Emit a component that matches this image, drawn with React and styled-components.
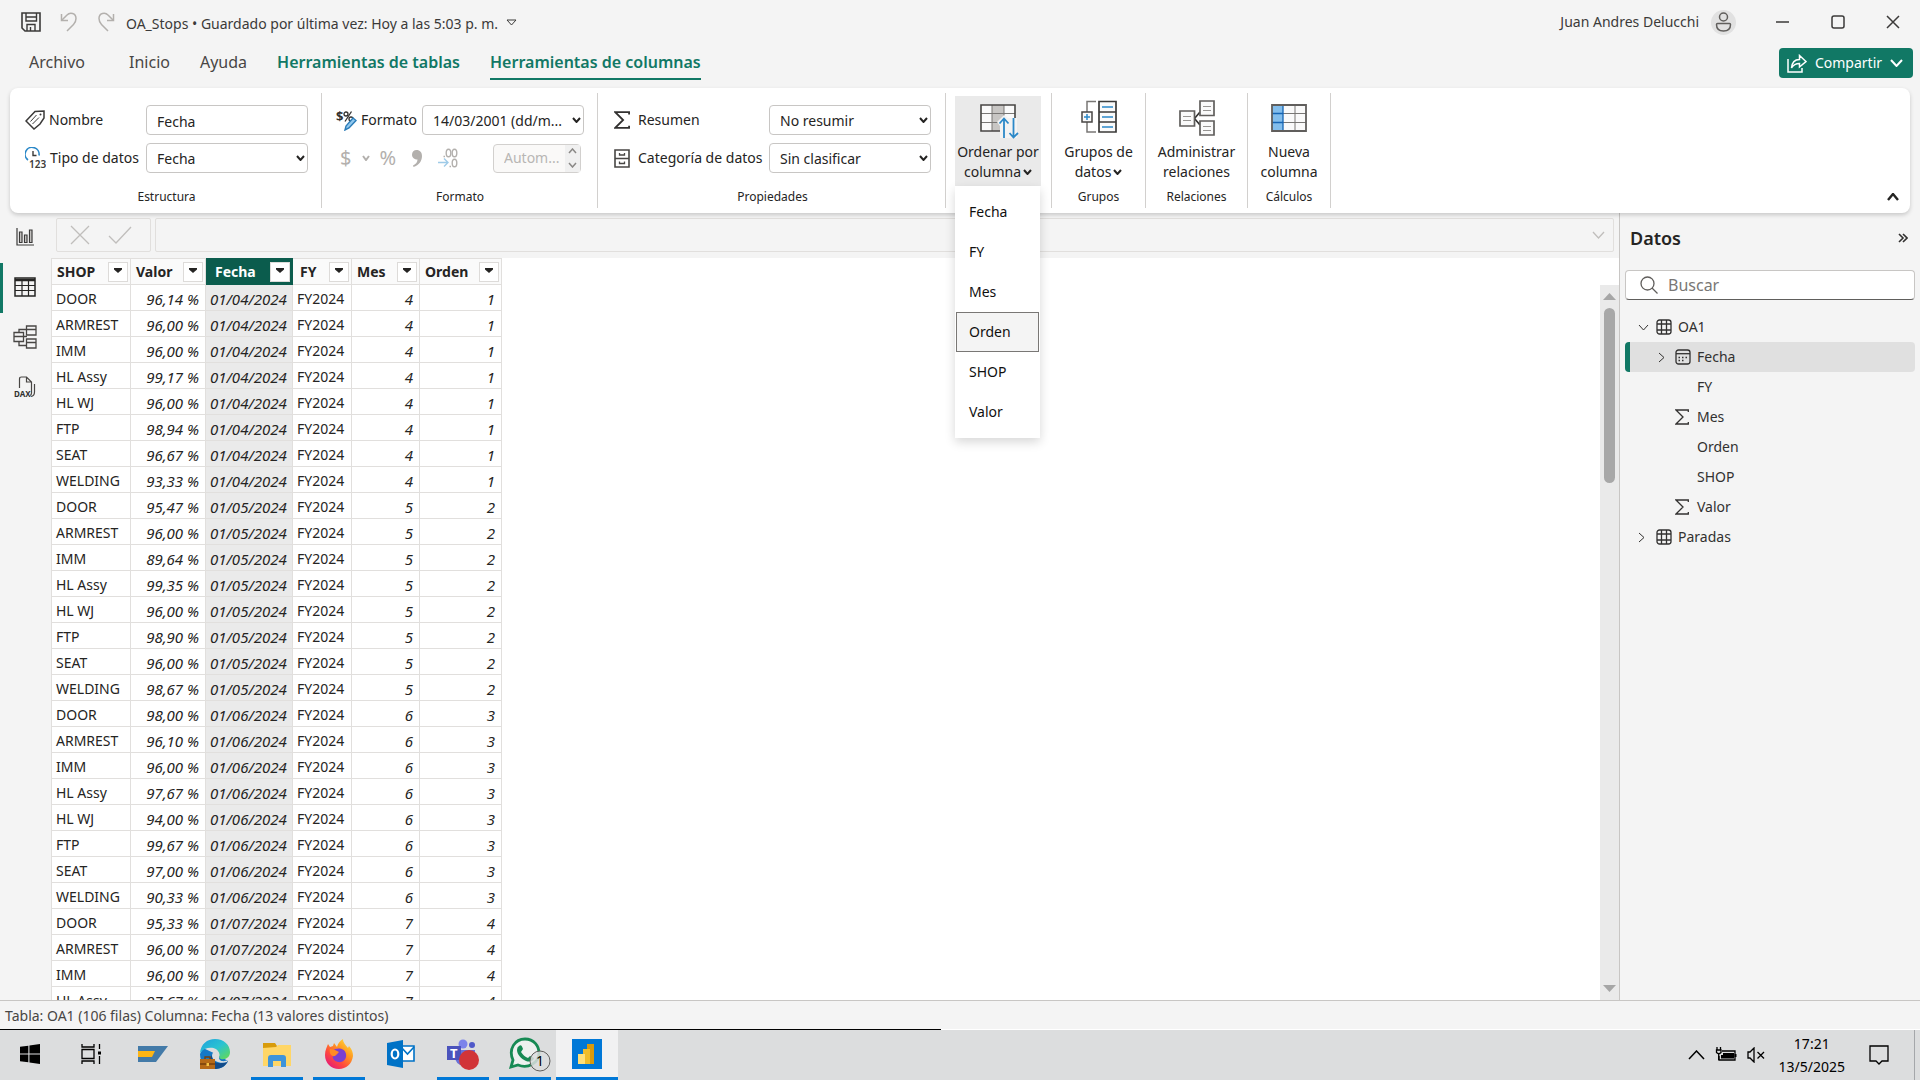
import React from 'react';
import styled, { createGlobalStyle } from 'styled-components';

const GlobalStyle = createGlobalStyle`
  * {
    box-sizing: border-box;
  }

  body {
    margin: 0;
    background: #f4f4f4;
    color: #252423;
    font-family: 'Noto Sans', 'Open Sans', sans-serif;
    font-size: 14px;
    line-height: 20px;
  }

  button,
  input,
  select {
    margin: 0;
    padding: 0;
    border: 0;
    background: none;
    color: inherit;
    font: inherit;
  }

  svg {
    display: block;
    flex: none;
  }
`;

const Window = styled.div`
  display: flex;
  flex-direction: column;
  height: 100vh;
  overflow: hidden;
`;

const TitleBar = styled.header`
  display: flex;
  align-items: center;
  height: 44px;
  padding: 0 20px 0 21px;
  color: #3b3a39;
`;

const QuickActions = styled.div`
  display: flex;
  gap: 19px;
  margin-right: 11px;
`;

const IconButton = styled.button`
  display: flex;
  align-items: center;
  justify-content: center;
`;

const DocumentTitle = styled.span`
  margin-right: 8px;
  padding-top: 4px;
  white-space: nowrap;
`;

const Account = styled.div`
  display: flex;
  align-items: center;
  gap: 12px;
  margin-left: auto;
  margin-right: 40px;
`;

const WindowControls = styled.div`
  display: flex;
  gap: 41px;
`;

const TabBar = styled.nav`
  display: flex;
  align-items: flex-start;
  height: 44px;
  padding: 4px 7px 0 29px;
`;

const Tab = styled.a`
  height: 30px;
  margin-top: 2px;
  margin-right: ${(props) => props.$gap || 30}px;
  border-bottom: 2px solid ${(props) => (props.$active ? '#117865' : 'transparent')};
  color: ${(props) => (props.$contextual ? '#117865' : '#484644')};
  font-size: 16px;
  font-weight: ${(props) => (props.$contextual ? 600 : 400)};
  line-height: 24px;
  text-decoration: none;
  white-space: nowrap;
`;

const ShareButton = styled.button`
  display: flex;
  align-items: center;
  justify-content: space-between;
  width: 134px;
  height: 30px;
  margin-left: auto;
  padding: 0 10px 0 8px;
  border-radius: 4px;
  background: #117865;
  color: #fff;
`;

const Ribbon = styled.section`
  position: relative;
  z-index: 2;
  display: flex;
  height: 125px;
  margin: 0 10px;
  padding: 5px 0;
  border-radius: 8px;
  background: #fff;
  box-shadow: 0 2px 4px rgba(0, 0, 0, 0.18);
`;

const RibbonGroup = styled.div`
  display: flex;
  flex-direction: column;
  padding: ${(props) => props.$pad};
  border-right: 1px solid #d2d0ce;
`;

const FieldGrid = styled.div`
  display: grid;
  grid-template-columns: ${(props) => props.$label}px 162px;
  row-gap: 8px;
  padding-top: 12px;
`;

const FieldLabel = styled.label`
  display: flex;
  align-items: center;
  gap: ${(props) => props.$gap || 4}px;
  height: 30px;
  white-space: nowrap;
`;

const Caption = styled.div`
  margin-top: auto;
  padding-bottom: 1px;
  font-size: 12px;
  text-align: center;
`;

const TextInput = styled.input`
  width: 100%;
  height: 30px;
  padding: 2px 10px 0;
  border: 1px solid #c8c6c4;
  border-radius: 4px;
  background: #fff;
`;

const SelectWrap = styled.div`
  position: relative;
  height: 30px;
`;

const SelectBox = styled.select`
  width: 100%;
  height: 30px;
  padding: 2px 10px 0;
  border: 1px solid #c8c6c4;
  border-radius: 4px;
  background: #fff;
  appearance: none;
`;

const SelectArrow = styled.span`
  position: absolute;
  top: 12px;
  right: 3px;
  pointer-events: none;
`;

const FormatRow = styled.div`
  grid-column: 1 / -1;
  display: flex;
  align-items: center;
  height: 30px;
  padding: 0 3px 0 4px;
  color: #b3b0ad;
`;

const FormatButton = styled.button`
  display: flex;
  align-items: center;
  margin-right: ${(props) => props.$gap}px;
  font-size: 20px;
  line-height: 30px;
`;

const Spinner = styled.div`
  display: flex;
  width: 88px;
  height: 29px;
  margin-left: auto;
  border: 1px solid #d2d0ce;
  border-radius: 4px;
  background: #faf9f8;
`;

const SpinnerInput = styled.input`
  width: 71px;
  padding-left: 10px;

  &:disabled {
    color: #b8b6b4;
  }
`;

const SpinnerButtons = styled.div`
  display: flex;
  flex-direction: column;
  justify-content: space-around;
  align-items: center;
  width: 15px;
  background: #f0f0f0;
  color: #8a8886;
`;

const MenuAnchor = styled.div`
  position: relative;
`;

const LargeButton = styled.button`
  display: flex;
  flex-direction: column;
  align-items: center;
  gap: 6px;
  width: ${(props) => props.$width}px;
  height: 90px;
  margin-top: 3px;
  padding-top: 4px;
  background: ${(props) => (props.$open ? '#eaeaea' : 'transparent')};
  white-space: nowrap;

  > svg {
    overflow: visible;
  }
`;

const TwoLines = styled.span`
  display: flex;
  flex-direction: column;
  align-items: center;
`;

const LastLine = styled.span`
  display: flex;
  align-items: center;
  gap: 2px;
`;

const DropMenu = styled.ul`
  position: absolute;
  top: 100%;
  left: 0;
  width: 85px;
  margin: 0;
  padding: 6px 1px;
  background: #fff;
  box-shadow: 0 4px 10px rgba(0, 0, 0, 0.16);
  list-style: none;
`;

const MenuItem = styled.button`
  display: block;
  width: 100%;
  height: 40px;
  padding: 0 12px;
  border: 1px solid ${(props) => (props.$hovered ? '#797775' : 'transparent')};
  background: ${(props) => (props.$hovered ? '#f4f4f4' : 'transparent')};
  color: #11100f;
  text-align: left;
`;

const CollapseButton = styled(IconButton)`
  align-self: flex-end;
  height: 22px;
  margin-left: auto;
  padding: 0 11px;
`;

const Workspace = styled.div`
  display: flex;
  flex: 1;
  min-height: 0;
`;

const ViewRail = styled.nav`
  display: flex;
  flex-direction: column;
  width: 51px;
`;

const RailButton = styled.button`
  display: flex;
  align-items: center;
  justify-content: center;
  height: 50px;
  padding: 0 4px 3px 0;
  border-left: 3px solid ${(props) => (props.$active ? '#117865' : 'transparent')};
  color: #3b3a39;
`;

const Center = styled.main`
  display: flex;
  flex: 1;
  flex-direction: column;
  min-width: 0;
`;

const FormulaBar = styled.div`
  display: flex;
  gap: 4px;
  height: 45px;
  padding: 5px 5px 6px;
`;

const FormulaActions = styled.div`
  display: flex;
  align-items: center;
  gap: 18px;
  width: 95px;
  padding-left: 13px;
  border: 1px solid #e1dfdd;
  border-radius: 2px;
  color: #c0bebc;
`;

const FormulaField = styled.div`
  display: flex;
  flex: 1;
  align-items: center;
  padding-right: 8px;
  border: 1px solid #e1dfdd;
  border-radius: 2px;
  color: #c0bebc;
`;

const FormulaInput = styled.input`
  flex: 1;
  height: 100%;
`;

const GridArea = styled.div`
  display: flex;
  flex: 1;
  justify-content: space-between;
  min-height: 0;
  overflow: hidden;
  background: #fff;
`;

const DataTable = styled.table`
  border-collapse: collapse;
  table-layout: fixed;
  width: 450px;
`;

const HeadCell = styled.th`
  width: ${(props) => props.$width}px;
  height: 26px;
  padding: 0 2px 0 5px;
  border: 1px solid ${(props) => (props.$selected ? '#0b5c4d' : '#e1dfdd')};
  background: ${(props) => (props.$selected ? '#0b5c4d' : '#fafafa')};
  color: ${(props) => (props.$selected ? '#fff' : '#252423')};
  font-size: 14px;
  font-weight: 700;
`;

const HeadContent = styled.div`
  display: flex;
  align-items: center;
  justify-content: space-between;
  padding-left: ${(props) => props.$indent || 0}px;
`;

const FilterButton = styled.button`
  display: flex;
  align-items: center;
  justify-content: center;
  width: 20px;
  height: 20px;
  padding-bottom: 2px;
  border: 1px solid #dddbd9;
  background: #fff;
  color: #252423;
`;

const Cell = styled.td`
  height: 26px;
  padding: 2px 6px 0 4px;
  border: 1px solid #e1dfdd;
  background: ${(props) => (props.$selected ? '#eaeaea' : '#fff')};
  font-size: ${(props) => (props.$numeric ? 15 : 14)}px;
  font-style: ${(props) => (props.$numeric ? 'italic' : 'normal')};
  text-align: ${(props) => (props.$numeric ? 'right' : 'left')};
  white-space: nowrap;
`;

const ScrollTrack = styled.div`
  display: flex;
  flex-direction: column;
  align-items: center;
  width: 19px;
  margin-top: 27px;
  padding: 8px 0;
  background: #eaeaea;
  color: #a6a6a6;
`;

const ScrollThumb = styled.div`
  width: 11px;
  height: 25%;
  margin: 8px 0 auto;
  border-radius: 6px;
  background: #a8a8a8;
`;

const DataPane = styled.aside`
  width: 301px;
  padding: 0 5px;
  border-left: 1px solid #c8c6c4;
`;

const PaneHeader = styled.div`
  display: flex;
  align-items: center;
  justify-content: space-between;
  height: 57px;
  padding: 0 7px 7px 5px;
`;

const PaneTitle = styled.h2`
  margin: 0;
  font-size: 18px;
  font-weight: 600;
`;

const SearchBox = styled.label`
  display: flex;
  align-items: center;
  gap: 10px;
  height: 30px;
  margin-bottom: 12px;
  padding: 0 14px;
  border: 1px solid #c8c6c4;
  border-bottom-color: #605e5c;
  border-radius: 4px;
  background: #fff;
  color: #605e5c;
`;

const SearchInput = styled.input`
  flex: 1;
  min-width: 0;
  font-size: 16px;

  &::placeholder {
    color: #797775;
    opacity: 1;
  }
`;

const FieldList = styled.ul`
  margin: 0;
  padding: 0;
  list-style: none;
`;

const FieldButton = styled.button`
  display: flex;
  align-items: center;
  width: 100%;
  height: 30px;
  padding-left: ${(props) => (props.$nested ? 28 : 8)}px;
  border-left: 5px solid ${(props) => (props.$selected ? '#117865' : 'transparent')};
  border-radius: 4px;
  background: ${(props) => (props.$selected ? '#e0e0e0' : 'transparent')};
  color: #323130;
`;

const Slot = styled.span`
  display: flex;
  width: ${(props) => props.$width}px;
`;

const StatusBar = styled.footer`
  height: 29px;
  padding: 5px 5px 0;
  border-top: 1px solid #c8c6c4;
  color: #484644;
`;

const Taskbar = styled.footer`
  display: flex;
  height: 51px;
  border-top: 1px solid;
  border-image: linear-gradient(to right, #000 49%, #fff 49%) 1;
  background: #dcddde;
  color: #000;
`;

const TaskButton = styled.button`
  display: flex;
  flex-direction: column;
  align-items: center;
  justify-content: center;
  width: 62px;
  height: 50px;
  padding: ${(props) => (props.$active ? 0 : '0 5px')};
  background: ${(props) => (props.$active ? '#f1f1f2' : 'transparent')};

  &:first-child {
    width: 60px;
  }

  &::after {
    content: '';
    width: 100%;
    height: 3px;
    margin-top: auto;
    background: ${(props) => (props.$running ? '#0078d7' : 'transparent')};
  }

  svg {
    margin-top: auto;
  }
`;

const Tray = styled.div`
  display: flex;
  align-items: center;
  margin-left: auto;
  padding-right: 5px;
`;

const Clock = styled.div`
  margin: 0 24px 0 14px;
  line-height: 23px;
  text-align: center;
`;

const ShowDesktop = styled.div`
  align-self: stretch;
  width: 1px;
  margin-left: 25px;
  background: #a5a7aa;
`;

const Chevron = ({ w = 10, h = 6, sw = 1, dir = 'down' }) => {
  const paths = {
    down: `M1 1L${w / 2} ${h - 1}L${w - 1} 1`,
    up: `M1 ${h - 1}L${w / 2} 1L${w - 1} ${h - 1}`,
    right: `M1 1L${w - 1} ${h / 2}L1 ${h - 1}`,
  };
  return (
    <svg width={w} height={h} fill="none" stroke="currentColor" strokeWidth={sw}>
      <path d={paths[dir]} />
    </svg>
  );
};

const Triangle = ({ up }) => (
  <svg width="13" height="7" fill="currentColor">
    <path d={up ? 'M0 7L6.5 0L13 7z' : 'M0 0H13L6.5 7z'} />
  </svg>
);

const SaveIcon = () => (
  <svg width="20" height="20" viewBox="0 0 20 20" fill="none" stroke="#3b3a39" strokeWidth="1.6">
    <path d="M1 1H19V19H4L1 16z" />
    <path d="M5 1V9H15.500V1M5.500 5H15M6 19V12.500H14V19M9.500 15V19" strokeWidth="1.4" />
  </svg>
);

const UndoIcon = ({ redo }) => (
  <svg width="18" height="20" viewBox="0 0 18 20" fill="none" stroke="#b3b0ad" strokeWidth="1.5">
    <g transform={redo ? 'translate(18 0) scale(-1 1)' : undefined}>
      <path d="M1.500 2V8.500H8" />
      <path d="M1.500 8.500L7 3C10-.300 16 1 16 6.500C16 9 15 11 13.500 12.500L7 19" />
    </g>
  </svg>
);

const TagIcon = () => (
  <svg width="20" height="20" viewBox="0 0 20 20" fill="none" stroke="#3b3a39" strokeWidth="1.5">
    <path d="M1 11L10 1.500L19 1V8L15 14L9 19z" />
    <path d="M5.500 11.500L11.500 5M7.500 14L14 7.500" strokeWidth="1" />
    <circle cx="15.500" cy="4.500" r="1" fill="#3b3a39" stroke="none" />
  </svg>
);

const DataTypeIcon = () => (
  <svg width="21" height="22" viewBox="0 0 21 22" fill="none">
    <path d="M3 13A7 7 0 1 1 14 8.500" stroke="#2b88c8" strokeWidth="1.6" />
    <path d="M8 4V8.500H11.500" stroke="#3b3a39" strokeWidth="1.4" />
    <text x="4" y="20.500" fill="#3b3a39" fontSize="10" fontWeight="600">123</text>
  </svg>
);

const FormatIcon = () => (
  <svg width="21" height="21" viewBox="0 0 21 21">
    <text x="0" y="11" fill="#323130" fontSize="13" fontWeight="700">$</text>
    <circle cx="10" cy="4" r="2" fill="none" stroke="#323130" strokeWidth="1.3" />
    <circle cx="15" cy="9" r="2" fill="none" stroke="#323130" strokeWidth="1.3" />
    <path d="M15.500 1.500L9 11.500" stroke="#323130" strokeWidth="1.3" />
    <path d="M9 20L10 16L17 8L20 10.500L13 18z" fill="#8fc7ee" stroke="#2b7cb8" strokeWidth="1.4" />
  </svg>
);

const DecimalsIcon = () => (
  <svg width="20" height="20" viewBox="0 0 20 20" fill="none" stroke="#b3b0ad" strokeWidth="1.4">
    <ellipse cx="10.500" cy="5" rx="2.300" ry="3.800" />
    <ellipse cx="16.500" cy="5" rx="2.300" ry="3.800" />
    <ellipse cx="16.500" cy="15" rx="2.300" ry="3.800" />
    <path d="M5.500 8.500H7M11.500 18.500H13" />
    <path d="M0 14.500H10M6 10.500L10 14.500L6 18.500" stroke="#9fcbe8" />
  </svg>
);

const CommaIcon = () => (
  <svg width="10" height="17" viewBox="0 0 10 17" fill="currentColor">
    <path d="M4.500 0C8 0 10 2.500 10 6C10 11 7 15 1.500 17L1 15.500C4 14 5.500 12 5.500 9.500C2.500 9.500 0 7.500 0 4.700C0 2 2 0 4.500 0z" />
  </svg>
);

const SigmaIcon = ({ w = 14, h = 16, sw = 1.3 }) => (
  <svg width={w} height={h} viewBox="0 0 14 16" fill="none" stroke="#323130" strokeWidth={sw}>
    <path d="M13.300 3V1H1L8 8L1 15H13.300V13" />
  </svg>
);

const CabinetIcon = () => (
  <svg width="16" height="19" viewBox="0 0 16 19" fill="none" stroke="#484644" strokeWidth="1.6">
    <path d="M1 1H15V18H1zM1 9.500H15" />
    <path d="M5.500 4V6H10.500V4M5.500 12.500V14.500H10.500V12.500" strokeWidth="1.3" />
  </svg>
);

const SortColumnIcon = () => (
  <svg width="36" height="36" viewBox="0 0 36 36" fill="none">
    <path d="M1 5H35V31H1z" fill="#fafafa" />
    <path d="M12 5H24V31H12z" fill="#c8c6c4" />
    <path d="M1 13.500H35M1 22.500H35M12 5V31M24 5V31" stroke="#797775" />
    <path d="M1 5H35V31H1z" stroke="#484644" strokeWidth="1.6" />
    <path d="M17 22L24 15L28 18H37V38H20V26z" fill="#f3f3f3" />
    <path d="M24 38V19M19.500 23.500L24 18.500L28.500 23.500M33.500 18V37M29.500 33L33.500 37.500L38 33" stroke="#2b88c8" strokeWidth="1.8" />
  </svg>
);

const GroupsIcon = () => (
  <svg width="36" height="36" viewBox="0 0 36 36" fill="none">
    <path d="M15 1.500H6V12M6 22V32H15" stroke="#797775" strokeWidth="1.5" />
    <path d="M18 1.500H35V32H18z" fill="#fafafa" stroke="#3b3a39" strokeWidth="1.7" />
    <path d="M18 12H35M18 22H35" stroke="#3b3a39" strokeWidth="1.5" />
    <path d="M1 12H11V22H1z" fill="#fafafa" stroke="#484644" strokeWidth="1.5" />
    <path d="M3 17H9M6 14V20M21 7H32M21 17H32M21 27H32" stroke="#2b88c8" strokeWidth="1.5" />
  </svg>
);

const RelationsIcon = () => (
  <svg width="36" height="36" viewBox="0 0 36 36" fill="none" stroke="#605e5c" strokeWidth="1.7">
    <path d="M15.500 18.500L21 12M15.500 18.500L21 25" stroke="#323130" />
    <path d="M1 11H15.500V26H1zM21 1H35V15.500H21zM21 21H35V35H21z" fill="#fafafa" />
    <path d="M4 16.500H12M4 20.500H12M24 6.500H32M24 10.500H32M24 26.500H32M24 30.500H32" stroke="#979593" strokeWidth="1.2" />
  </svg>
);

const NewColumnIcon = () => (
  <svg width="36" height="36" viewBox="0 0 36 36" fill="none">
    <path d="M1 5H35V31H1z" fill="#fafafa" />
    <path d="M1 5H12V31H1z" fill="#83beec" />
    <path d="M12 13.500H35M12 22.500H35M24 5V31" stroke="#797775" />
    <path d="M1 13.500H12M1 22.500H12M12 5V31" stroke="#1565b4" strokeWidth="1.3" />
    <path d="M1 5H35V31H1z" stroke="#605e5c" strokeWidth="1.8" />
  </svg>
);

const ReportIcon = () => (
  <svg width="18" height="18" viewBox="0 0 18 18" fill="#d2d0ce" stroke="currentColor" strokeWidth="1.2">
    <path d="M1 0V17H18" fill="none" />
    <path d="M3.500 4H6V14.500H3.500zM8.500 7H11V14.500H8.500zM13.500 2H16V14.500H13.500z" />
  </svg>
);

const TableIcon = () => (
  <svg width="22" height="20" viewBox="0 0 22 20" fill="none" stroke="#252423" strokeWidth="1.5">
    <path d="M1 1H21V19H1z" />
    <path d="M1 3H21" strokeWidth="2.500" />
    <path d="M1 8.500H21M1 13.500H21M8 4V19M14.500 4V19" strokeWidth="1.200" />
  </svg>
);

const ModelIcon = () => (
  <svg width="24" height="24" viewBox="0 0 24 24" fill="none" stroke="#484644" strokeWidth="1.3">
    <path d="M13 4.500H6V8M6 16V20.500H13M10 11.500H14" />
    <path d="M1 7.500H10.500V16.500H1zM1 11.500H10.500M13.500 1H23V10H13.500zM13.500 4.500H23M13.500 14H23V23H13.500zM13.500 17.500H23" />
  </svg>
);

const DaxIcon = () => (
  <svg width="22" height="22" viewBox="0 0 22 22" fill="none" stroke="#484644" strokeWidth="1.2">
    <path d="M5.500 12V3Q5.500 1 7.500 1H12.500L17.500 6V17Q17.500 19 16 19.500M12.500 1V6H17.500M20.500 8V16Q20.500 20 17 20.500" />
    <text x="0" y="20.500" fill="#323130" stroke="none" fontSize="8" fontWeight="700">DAX</text>
  </svg>
);

const TableSmallIcon = () => (
  <svg width="16" height="16" viewBox="0 0 16 16" fill="none" stroke="#323130" strokeWidth="1.3">
    <rect x="1" y="1" width="14" height="14" rx="2.500" />
    <path d="M5.500 1V15M10.500 1V15M1 5H15M1 11H15" />
  </svg>
);

const CalendarIcon = () => (
  <svg width="16" height="16" viewBox="0 0 16 16" fill="none" stroke="#323130" strokeWidth="1.3">
    <rect x="1" y="1" width="14" height="14" rx="2.500" />
    <path d="M1 4.700H15" />
    <path d="M3.500 8.500H12.500M3.500 11.500H9.500" strokeWidth="1.500" strokeDasharray="1.500 2" />
  </svg>
);

const fieldIcons = { table: TableSmallIcon, date: CalendarIcon, sum: SigmaIcon };

const WindowsIcon = () => (
  <svg width="20" height="20" viewBox="0 0 18 18" fill="currentColor">
    <path d="M0 2.500L7.500 1.500V8.500H0zM8.500 1.300L18 0V8.500H8.500zM0 9.500H7.500V16.500L0 15.500zM8.500 9.500H18V18L8.500 16.700z" />
  </svg>
);

const TaskViewIcon = () => (
  <svg width="20" height="20" viewBox="0 0 20 20" fill="none" stroke="currentColor" strokeWidth="1.3">
    <path d="M1 0V3H13V0M1 20V17H13V20M1 5.500H13V14.500H1zM18.500 0V5M18.500 12V20" />
    <path d="M17 7.500H20V10.500H17z" fill="currentColor" stroke="none" />
  </svg>
);

const StripeAppIcon = () => (
  <svg width="30" height="30" viewBox="0 0 30 30">
    <path d="M0 7H30L18 23H0z" fill="#437aa8" />
    <path d="M0 12H17L14 18H0z" fill="#fdb515" />
  </svg>
);

const EdgeIcon = () => (
  <svg width="30" height="30" viewBox="0 0 30 30">
    <defs>
      <linearGradient id="edgeTop" x1="0" y1="0" x2="1" y2="1">
        <stop offset="0" stopColor="#1da1dc" />
        <stop offset="0.500" stopColor="#2bc3d2" />
        <stop offset="1" stopColor="#67dc4b" />
      </linearGradient>
    </defs>
    <path d="M0 15C0 24 6 30 15 30C21 30 26 27 28 22L18 16L3 9z" fill="#1679c6" />
    <path d="M0 14C1 5 7 0 15 0C24 0 30 6 30 13C30 18 26 21 21 20C18 19 20 17 19 14C17 7 5 7 0 14z" fill="url(#edgeTop)" />
    <path d="M12 16C12 25 21 26 28 22C25 28 20 30 14 30C8 28 9 19 12 16z" fill="#124b8a" />
    <path d="M12 17C12 12 17 11 19 14C20 17 18 19 20 21C22 23 26 22 28 21L27 23C21 25 13 23 12 17z" fill="#dcddde" />
    <path d="M0 20H15V30H0z" fill="#b66a18" />
    <path d="M5 20V18H10V20M0 25H15" fill="none" stroke="#77400c" strokeWidth="1.400" />
    <path d="M6.500 24H9V27H6.500z" fill="#f5c243" />
  </svg>
);

const FolderIcon = () => (
  <svg width="28" height="28" viewBox="0 0 28 28">
    <path d="M0 3H12L14 6V9H0z" fill="#d89b0b" />
    <path d="M0 8L13 7L15 5H28V26H0z" fill="#ffd667" />
    <path d="M5 27V18Q5 15 8 15H20Q23 15 23 18V27H18V21H10V27z" fill="#3f94da" />
  </svg>
);

const FirefoxIcon = () => (
  <svg width="30" height="30" viewBox="0 0 30 30">
    <defs>
      <linearGradient id="fox" x1="1" y1="0" x2="0.200" y2="1">
        <stop offset="0" stopColor="#fff04a" />
        <stop offset="0.400" stopColor="#ff9a1f" />
        <stop offset="0.700" stopColor="#ff4a3d" />
        <stop offset="1" stopColor="#e3187c" />
      </linearGradient>
    </defs>
    <path d="M1 16C1 11 3 8 4 5L6 8L9 7L10 4L13 8C14 4 16 2 19 0C19 4 22 6 24 9L25 7C28 10 29 14 29 17C28 25 22 30 15 30C7 30 1 24 1 16z" fill="url(#fox)" />
    <path d="M9 12C12 8 21 9 22 15C23 20 19 24 14 23C10 22 8 19 9 16L14 15z" fill="#7a3fd0" />
    <path d="M6 10L11 11L15 13L11 17C7 18 5 14 6 10z" fill="#ff8b23" />
  </svg>
);

const OutlookIcon = () => (
  <svg width="28" height="28" viewBox="0 0 28 28">
    <path d="M14 6H27V21H14z" fill="#fff" stroke="#0072c6" strokeWidth="1.600" />
    <path d="M14 7L20.500 14L27 7" fill="none" stroke="#0072c6" strokeWidth="1.600" />
    <path d="M0 3L16 0V28L0 25z" fill="#0072c6" />
    <ellipse cx="8" cy="14" rx="3.300" ry="4.500" fill="none" stroke="#fff" strokeWidth="2.200" />
  </svg>
);

const TeamsIcon = () => (
  <svg width="34" height="32" viewBox="0 0 34 32">
    <circle cx="17" cy="6" r="4.500" fill="#7b83eb" />
    <circle cx="26" cy="7" r="3" fill="#5059c9" />
    <path d="M9 12H29V20Q27 28 18 28Q9 27 9 18z" fill="#6870d8" />
    <path d="M1 8H15V22H1z" fill="#4b53bc" />
    <text x="4" y="20" fill="#fff" fontSize="13" fontWeight="700">T</text>
    <circle cx="23" cy="22" r="10" fill="#d13438" />
  </svg>
);

const WhatsAppIcon = () => (
  <svg width="52" height="36" viewBox="-10 0 52 36">
    <path d="M2 31L4 24C-1 13 6 3 16 3C25 3 30 10 30 17C30 27 19 33 9 29z" fill="#eef1ef" stroke="#178a54" strokeWidth="2.800" />
    <path d="M10 10C12 8 13 10 14 13L12 16C14 19 16 21 19 22L21 20L25 22C24 26 20 26 17 25C12 23 8 18 8 14Q8 11 10 10z" fill="#178a54" />
    <circle cx="31" cy="25" r="10" fill="#dcddde" fillOpacity="0.850" stroke="#605e5c" />
    <text x="31" y="30" fontSize="14" textAnchor="middle">1</text>
  </svg>
);

const PowerBiIcon = () => (
  <svg width="30" height="30" viewBox="0 0 30 30">
    <path d="M0 0H30V30H0z" fill="#0078d7" />
    <path d="M15 5H22V25H15z" fill="#d99a0b" />
    <path d="M11 10H18V25H11z" fill="#f0bd2b" />
    <path d="M6 15H13V25H6z" fill="#ffe07a" />
  </svg>
);

const taskbarApps = [
  { name: 'Inicio', icon: WindowsIcon },
  { name: 'Vista de tareas', icon: TaskViewIcon },
  { name: 'Aplicación', icon: StripeAppIcon },
  { name: 'Edge', icon: EdgeIcon },
  { name: 'Explorador de archivos', icon: FolderIcon, running: true },
  { name: 'Firefox', icon: FirefoxIcon, running: true },
  { name: 'Outlook', icon: OutlookIcon },
  { name: 'Teams', icon: TeamsIcon, running: true },
  { name: 'WhatsApp', icon: WhatsAppIcon, running: true },
  { name: 'Power BI Desktop', icon: PowerBiIcon, running: true, active: true },
];

const columns = [
  { name: 'SHOP', width: 79 },
  { name: 'Valor', width: 75 },
  { name: 'Fecha', width: 87, indent: 4, selected: true },
  { name: 'FY', width: 59, indent: 2 },
  { name: 'Mes', width: 68 },
  { name: 'Orden', width: 82 },
];

const shops = ['DOOR', 'ARMREST', 'IMM', 'HL Assy', 'HL WJ', 'FTP', 'SEAT', 'WELDING'];

const values = [
  '96,14', '96,00', '96,00', '99,17', '96,00', '98,94', '96,67', '93,33',
  '95,47', '96,00', '89,64', '99,35', '96,00', '98,90', '96,00', '98,67',
  '98,00', '96,10', '96,00', '97,67', '94,00', '99,67', '97,00', '90,33',
  '95,33', '96,00', '96,00', '97,67',
];

const rows = values.map((value, i) => {
  const order = Math.floor(i / shops.length) + 1;
  return {
    id: i,
    shop: shops[i % shops.length],
    value: `${value} %`,
    date: `01/0${order + 3}/2024`,
    month: order + 3,
    order,
  };
});

const fields = [
  { name: 'OA1', icon: 'table', chevron: 'down' },
  { name: 'Fecha', icon: 'date', chevron: 'right', nested: true, selected: true },
  { name: 'FY', nested: true },
  { name: 'Mes', icon: 'sum', nested: true },
  { name: 'Orden', nested: true },
  { name: 'SHOP', nested: true },
  { name: 'Valor', icon: 'sum', nested: true },
  { name: 'Paradas', icon: 'table', chevron: 'right' },
];

const sortOptions = ['Fecha', 'FY', 'Mes', 'Orden', 'SHOP', 'Valor'];

const RibbonSelect = ({ id, value }) => (
  <SelectWrap>
    <SelectBox id={id} defaultValue={value}>
      <option value={value}>{value}</option>
    </SelectBox>
    <SelectArrow>
      <Chevron w={9} h={6} sw={2} />
    </SelectArrow>
  </SelectWrap>
);

const LargeRibbonButton = ({ icon: Icon, first, second, width, menu, open }) => (
  <LargeButton $width={width} $open={open} aria-expanded={open}>
    <Icon />
    <TwoLines>
      <span>{first}</span>
      <LastLine>
        {second}
        {menu && <Chevron w={9} h={6} sw={2} />}
      </LastLine>
    </TwoLines>
  </LargeButton>
);

const Field = ({ field }) => {
  const Icon = fieldIcons[field.icon];
  const down = field.chevron === 'down';
  return (
    <li>
      <FieldButton $nested={field.nested} $selected={field.selected}>
        <Slot $width={field.nested ? 17 : 18}>
          {field.chevron && <Chevron w={down ? 11 : 7} h={down ? 7 : 11} dir={field.chevron} />}
        </Slot>
        <Slot $width={22}>{Icon && <Icon />}</Slot>
        {field.name}
      </FieldButton>
    </li>
  );
};

const App = () => {
  return (
    <Window>
      <GlobalStyle />
      <TitleBar>
        <QuickActions>
          <IconButton aria-label="Guardar"><SaveIcon /></IconButton>
          <IconButton aria-label="Deshacer"><UndoIcon /></IconButton>
          <IconButton aria-label="Rehacer"><UndoIcon redo /></IconButton>
        </QuickActions>
        <DocumentTitle>OA_Stops • Guardado por última vez: Hoy a las 5:03 p. m.</DocumentTitle>
        <IconButton aria-label="Detalles del archivo">
          <svg width="11" height="7" fill="none" stroke="currentColor">
            <path d="M1 1H10L5.500 6z" />
          </svg>
        </IconButton>
        <Account>
          <span>Juan Andres Delucchi</span>
          <svg width="25" height="25" viewBox="0 0 25 25" fill="none" stroke="#605e5c" strokeWidth="1.500">
            <circle cx="12.500" cy="12.500" r="12.500" fill="#e1e1e1" stroke="none" />
            <circle cx="12.500" cy="7" r="4" />
            <path d="M5.500 14.500Q5.500 13.500 6.500 13.500H18.500Q19.500 13.500 19.500 14.500C19.500 19 17 21 12.500 21C8 21 5.500 19 5.500 14.500z" />
          </svg>
        </Account>
        <WindowControls>
          <IconButton aria-label="Minimizar">
            <svg width="14" height="14" stroke="#3b3a39" strokeWidth="1.500"><path d="M0 7H13" /></svg>
          </IconButton>
          <IconButton aria-label="Maximizar">
            <svg width="14" height="14" fill="none" stroke="#3b3a39" strokeWidth="1.500">
              <rect x="1" y="1" width="12" height="12" rx="2" />
            </svg>
          </IconButton>
          <IconButton aria-label="Cerrar">
            <svg width="14" height="14" stroke="#3b3a39" strokeWidth="1.500"><path d="M1 1L13 13M13 1L1 13" /></svg>
          </IconButton>
        </WindowControls>
      </TitleBar>

      <TabBar>
        <Tab href="#archivo" $gap={44}>Archivo</Tab>
        <Tab href="#inicio">Inicio</Tab>
        <Tab href="#ayuda">Ayuda</Tab>
        <Tab href="#tablas" $contextual>Herramientas de tablas</Tab>
        <Tab href="#columnas" $contextual $active>Herramientas de columnas</Tab>
        <ShareButton>
          <svg width="20" height="19" viewBox="0 0 20 19" fill="none" stroke="#fff" strokeWidth="1.500">
            <path d="M1 5V18H15V14" />
            <path d="M4.500 14C5 8 8 5.500 12.500 5.500V1.500L19 7.500L12.500 13V9.500C9 9.500 6.500 10.500 4.500 14z" />
          </svg>
          Compartir
          <Chevron w={13} h={8} sw={2} />
        </ShareButton>
      </TabBar>

      <Ribbon>
        <RibbonGroup $pad="0 13px 0 15px">
          <FieldGrid $label={121}>
            <FieldLabel htmlFor="nombre"><TagIcon />Nombre</FieldLabel>
            <TextInput id="nombre" defaultValue="Fecha" />
            <FieldLabel htmlFor="tipo"><DataTypeIcon />Tipo de datos</FieldLabel>
            <RibbonSelect id="tipo" value="Fecha" />
          </FieldGrid>
          <Caption>Estructura</Caption>
        </RibbonGroup>
        <RibbonGroup $pad="0 13px 0 14px">
          <FieldGrid $label={86}>
            <FieldLabel htmlFor="formato"><FormatIcon />Formato</FieldLabel>
            <RibbonSelect id="formato" value="14/03/2001 (dd/m..." />
            <FormatRow>
              <FormatButton $gap={11}>$</FormatButton>
              <FormatButton $gap={9} aria-label="Moneda"><Chevron w={8} h={6} sw={2} /></FormatButton>
              <FormatButton $gap={16}>%</FormatButton>
              <FormatButton $gap={16} aria-label="Separador de miles"><CommaIcon /></FormatButton>
              <FormatButton $gap={0} aria-label="Decimales"><DecimalsIcon /></FormatButton>
              <Spinner>
                <SpinnerInput aria-label="Posiciones decimales" defaultValue="Autom..." disabled />
                <SpinnerButtons>
                  <Chevron w={9} h={6} sw={1.5} dir="up" />
                  <Chevron w={9} h={6} sw={1.5} />
                </SpinnerButtons>
              </Spinner>
            </FormatRow>
          </FieldGrid>
          <Caption>Formato</Caption>
        </RibbonGroup>
        <RibbonGroup $pad="0 14px 0 16px">
          <FieldGrid $label={155}>
            <FieldLabel htmlFor="resumen" $gap={8}><SigmaIcon w={16} h={18} sw={1.6} />Resumen</FieldLabel>
            <RibbonSelect id="resumen" value="No resumir" />
            <FieldLabel htmlFor="categoria" $gap={8}><CabinetIcon />Categoría de datos</FieldLabel>
            <RibbonSelect id="categoria" value="Sin clasificar" />
          </FieldGrid>
          <Caption>Propiedades</Caption>
        </RibbonGroup>
        <RibbonGroup $pad="0 10px 0 9px">
          <MenuAnchor>
            <LargeRibbonButton icon={SortColumnIcon} first="Ordenar por" second="columna" width={86} menu open />
            <DropMenu>
              {sortOptions.map((option) => (
                <li key={option}>
                  <MenuItem $hovered={option === 'Orden'}>{option}</MenuItem>
                </li>
              ))}
            </DropMenu>
          </MenuAnchor>
        </RibbonGroup>
        <RibbonGroup $pad="0">
          <LargeRibbonButton icon={GroupsIcon} first="Grupos de" second="datos" width={93} menu />
          <Caption>Grupos</Caption>
        </RibbonGroup>
        <RibbonGroup $pad="0">
          <LargeRibbonButton icon={RelationsIcon} first="Administrar" second="relaciones" width={101} />
          <Caption>Relaciones</Caption>
        </RibbonGroup>
        <RibbonGroup $pad="0">
          <LargeRibbonButton icon={NewColumnIcon} first="Nueva" second="columna" width={82} />
          <Caption>Cálculos</Caption>
        </RibbonGroup>
        <CollapseButton aria-label="Contraer la cinta">
          <Chevron w={12} h={8} sw={2.4} dir="up" />
        </CollapseButton>
      </Ribbon>

      <Workspace>
        <ViewRail>
          <RailButton aria-label="Vista de informe"><ReportIcon /></RailButton>
          <RailButton aria-label="Vista de tabla" $active><TableIcon /></RailButton>
          <RailButton aria-label="Vista de modelo"><ModelIcon /></RailButton>
          <RailButton aria-label="Vista de consultas DAX"><DaxIcon /></RailButton>
        </ViewRail>
        <Center>
          <FormulaBar>
            <FormulaActions>
              <IconButton aria-label="Cancelar">
                <svg width="20" height="20" stroke="currentColor" strokeWidth="1.300"><path d="M1 1L19 19M19 1L1 19" /></svg>
              </IconButton>
              <IconButton aria-label="Confirmar">
                <svg width="24" height="18" fill="none" stroke="currentColor" strokeWidth="1.300"><path d="M1 10L8 17L23 1" /></svg>
              </IconButton>
            </FormulaActions>
            <FormulaField>
              <FormulaInput aria-label="Fórmula" />
              <Chevron w={13} h={8} sw={1.3} />
            </FormulaField>
          </FormulaBar>
          <GridArea>
            <div>
              <DataTable>
                <thead>
                  <tr>
                    {columns.map((column) => (
                      <HeadCell key={column.name} $width={column.width} $selected={column.selected}>
                        <HeadContent $indent={column.indent}>
                          {column.name}
                          <FilterButton aria-label={`Filtrar ${column.name}`}>
                            <svg width="8" height="5" fill="currentColor"><path d="M0 0H8V1.500L4 5L0 1.500z" /></svg>
                          </FilterButton>
                        </HeadContent>
                      </HeadCell>
                    ))}
                  </tr>
                </thead>
                <tbody>
                  {rows.map((row) => (
                    <tr key={row.id}>
                      <Cell>{row.shop}</Cell>
                      <Cell $numeric>{row.value}</Cell>
                      <Cell $numeric $selected>{row.date}</Cell>
                      <Cell>FY2024</Cell>
                      <Cell $numeric>{row.month}</Cell>
                      <Cell $numeric>{row.order}</Cell>
                    </tr>
                  ))}
                </tbody>
              </DataTable>
            </div>
            <ScrollTrack>
              <Triangle up />
              <ScrollThumb />
              <Triangle />
            </ScrollTrack>
          </GridArea>
        </Center>
        <DataPane>
          <PaneHeader>
            <PaneTitle>Datos</PaneTitle>
            <IconButton aria-label="Contraer panel">
              <svg width="10" height="10" fill="none" stroke="#323130" strokeWidth="1.600">
                <path d="M1 1L5 5L1 9M5 1L9 5L5 9" />
              </svg>
            </IconButton>
          </PaneHeader>
          <SearchBox>
            <svg width="18" height="18" fill="none" stroke="currentColor" strokeWidth="1.300">
              <circle cx="7.500" cy="7.500" r="6.500" />
              <path d="M12 12L17.500 17.500" />
            </svg>
            <SearchInput type="search" placeholder="Buscar" aria-label="Buscar" />
          </SearchBox>
          <FieldList>
            {fields.map((field) => (
              <Field key={field.name} field={field} />
            ))}
          </FieldList>
        </DataPane>
      </Workspace>

      <StatusBar>Tabla: OA1 (106 filas) Columna: Fecha (13 valores distintos)</StatusBar>

      <Taskbar>
        {taskbarApps.map(({ name, icon: Icon, running, active }) => (
          <TaskButton key={name} aria-label={name} $running={running} $active={active}>
            <Icon />
          </TaskButton>
        ))}
        <Tray>
          <Chevron w={17} h={10} sw={1.5} dir="up" />
          <svg width="42" height="16" viewBox="0 0 42 16" fill="none" stroke="#000" strokeWidth="1.300">
            <path d="M17 4H30V13H14V9" />
            <path d="M18 6H29V11.500H16V8H18z" fill="#000" stroke="none" />
            <path d="M30.500 7V10" strokeWidth="2" />
            <path d="M12 3V0M15.500 3V0M11.500 3H16V5.500Q14 8 11.500 5.500zM13.700 7V13" />
          </svg>
          <svg width="18" height="16" viewBox="0 0 18 16" fill="none" stroke="#000" strokeWidth="1.300">
            <path d="M1 5H3L7 1V15L3 11H1z" />
            <path d="M10.500 5L17 11.500M17 5L10.500 11.500" />
          </svg>
          <Clock>
            <div>17:21</div>
            <div>13/5/2025</div>
          </Clock>
          <svg width="20" height="20" viewBox="0 0 20 20" fill="none" stroke="#000" strokeWidth="1.300">
            <path d="M1 1H19V16H13L10 19L7 16H1z" />
          </svg>
          <ShowDesktop />
        </Tray>
      </Taskbar>
    </Window>
  );
};

export default App;
